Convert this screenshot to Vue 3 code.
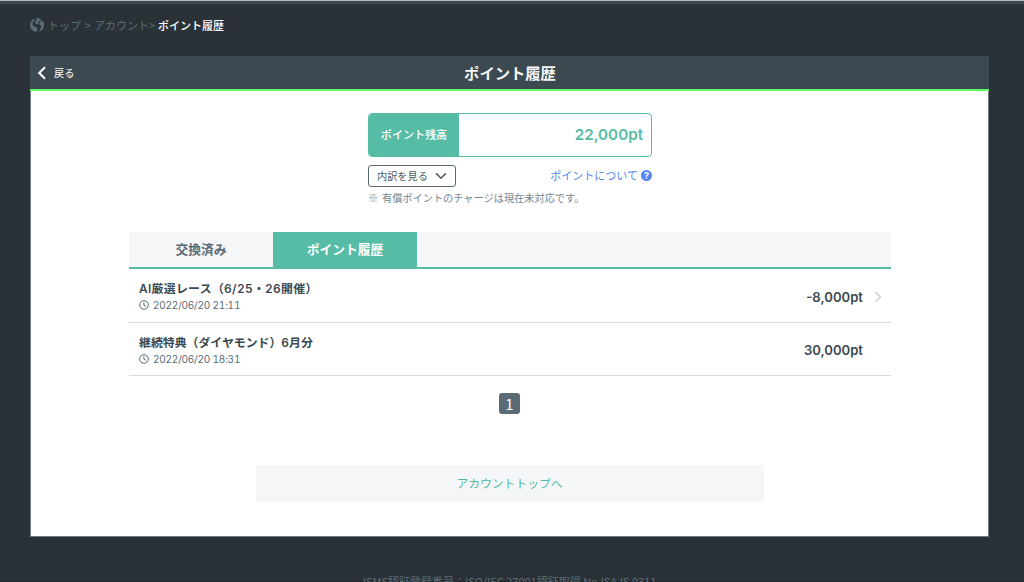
<script setup>
  import { ref } from 'vue'

  const tabs = ref(['交換済み', 'ポイント履歴'])
  const currentTab = ref(1)

  const histories = ref([
    {
      title: 'AI厳選レース（6/25・26開催）',
      date: '2022/06/20 21:11',
      point: '-8,000pt',
      link: true
    },
    {
      title: '継続特典（ダイヤモンド）6月分',
      date: '2022/06/20 18:31',
      point: '30,000pt',
      link: false
    }
  ])
</script>

<template>
  <div class="app">
    <nav class="breadcrumb">
      <svg class="logo" viewBox="0 0 14 14">
        <path d="M4.600.4C1.900 1.300 0 3.900 0 7c0 3.400 2.500 6.300 5.800 6.900 1-.6 1.700-1.500 1.600-2.700-.1-1.500-1.200-2.100-2.500-2.500C3.200 8.200 2.300 6.900 2.700 5.300c.3-1.300 1.100-2 2.300-2.400C4 2.500 3.900 1.300 4.600.4z" />
        <path d="M6.500 0c-.5.900-.3 1.700.5 2.200-1.200.4-2.100 1.300-1.900 2.500.2 1.200 1.300 1.800 2.400 1.500 1-.3 1.500-1.300 1-2.200C9.200 3.300 10.300 3 11.200 1.500A7 7 0 0 0 6.500 0z" />
        <path d="M12.300 2.600c-1 .8-2.500 1.200-2.800 2.600-.2 1.400.7 2.200 1.700 2.300-.1 2.400-.9 4.400-2.500 6.300C11.800 13 14 10.300 14 7c0-1.600-.6-3.200-1.700-4.400z" />
      </svg>
      <a class="top">トップ</a>
      <span class="gt">&gt;</span>
      <a>アカウント&gt;</a>
      <span class="here">ポイント履歴</span>
    </nav>

    <main class="panel">
      <header class="panel-head">
        <a class="back">
          <svg viewBox="0 0 10 14"><path d="M8 1.300 2.200 7 8 12.700" /></svg>
          <span>戻る</span>
        </a>
        <h1>ポイント履歴</h1>
      </header>

      <section class="balance">
        <div class="balance-box">
          <span class="label">ポイント残高</span>
          <span class="value">22,000pt</span>
        </div>
        <div class="balance-sub">
          <button>
            内訳を見る
            <svg viewBox="0 0 12 8"><path d="M1.200 1.400 6 6.200l4.800-4.800" /></svg>
          </button>
          <a class="about">
            <span>ポイントについて</span>
            <i>?</i>
          </a>
        </div>
        <p>※ 有償ポイントのチャージは現在未対応です。</p>
      </section>

      <div class="tabs">
        <a v-for="(tab, index) in tabs"
        :key="index"
        :class="{ active: currentTab == index }"
        @click="currentTab = index">{{ tab }}</a>
      </div>

      <ul class="list">
        <li v-for="(item, index) in histories" :key="index">
          <div class="info">
            <h2>{{ item.title }}</h2>
            <div class="date">
              <svg viewBox="0 0 10 10">
                <circle cx="5" cy="5" r="4.300" />
                <path d="M4.900 2.300v2.900l1.900 1.100" />
              </svg>
              <span>{{ item.date }}</span>
            </div>
          </div>
          <span class="point">{{ item.point }}</span>
          <svg v-if="item.link" class="arrow" viewBox="0 0 8 12"><path d="M1.400 1.200 6.400 6l-5 4.800" /></svg>
        </li>
      </ul>

      <div class="pager"><span>1</span></div>

      <a class="account-top">アカウントトップへ</a>
    </main>

    <footer>ISMS認証登録番号：ISO/IEC 27001認証取得 No.ISA IS 0311</footer>
  </div>
</template>

<style>
body{
  margin: 0;
  background: #2a3238;
  overflow: hidden;
}
</style>

<style scoped>
*{
  margin: 0;
  padding: 0;
  box-sizing: border-box;
}
.app{
  height: 582px;
  overflow: hidden;
  background: #2a3238;
  border-top: 1px solid #b4bec0;
  box-shadow: inset 0 3px 0 #3c4950, inset 0 -1px 0 #20272b;
  color: #3c4950;
  font-family: "Noto Sans CJK JP", sans-serif;
}
svg{
  flex: none;
  fill: none;
  stroke: currentColor;
}
.breadcrumb{
  display: flex;
  align-items: center;
  height: 55px;
  padding: 0 0 8px 30px;
  font-size: 11px;
  color: #5b6c76;
  white-space: nowrap;
}
.logo{
  width: 14px;
  height: 14px;
  fill: currentColor;
  stroke: none;
  margin-right: 4px;
}
.gt{
  width: 13px;
  text-align: center;
}
.here{
  margin-left: 3px;
  color: #fff;
  font-weight: 500;
}
.panel{
  width: 959px;
  height: 481px;
  margin-left: 30px;
  background: #fff;
  border: 1px solid #737b80;
  border-width: 0 1px 1px;
}
.panel-head{
  display: grid;
  grid-template-columns: 100px 1fr 100px;
  align-items: center;
  height: 35px;
  margin: 0 -1px;
  background: #3c4950;
  border-bottom: 2px solid #5cfc62;
}
.back{
  display: flex;
  align-items: center;
  padding-left: 7px;
  color: #fff;
  font-size: 10.200px;
}
.back svg{
  width: 10px;
  height: 14px;
  stroke-width: 2;
  margin-right: 7px;
}
h1{
  padding: 0 0 1px 1px;
  color: #f4f6f8;
  font-size: 15.300px;
  font-weight: 700;
  line-height: 20px;
  text-align: center;
}
.balance{
  width: 284px;
  margin: 22px 0 0 337px;
}
.balance-box{
  display: flex;
  height: 44px;
  border: 1px solid #56bca6;
  border-radius: 4px;
  overflow: hidden;
}
.label{
  width: 90px;
  background: #56bca6;
  color: #fff;
  font-size: 11.050px;
  font-weight: 500;
  line-height: 40px;
  text-align: center;
}
.value{
  flex: 1;
  padding-right: 8px;
  color: #56bca6;
  font-family: Inter, sans-serif;
  font-size: 15.200px;
  font-weight: 600;
  line-height: 42px;
  text-align: right;
}
.balance-sub{
  display: flex;
  justify-content: space-between;
  margin-top: 8px;
}
button{
  display: flex;
  align-items: center;
  width: 88px;
  height: 22px;
  padding: 0 7px 2px 8px;
  background: #fff;
  border: 1px solid #5a6b75;
  border-radius: 3px;
  color: #4d5e68;
  font-family: inherit;
  font-size: 10.200px;
  white-space: nowrap;
}
button svg{
  width: 12px;
  height: 8px;
  margin: 2px 0 0 7px;
  stroke-width: 1.600;
}
.about{
  display: flex;
  align-items: center;
  height: 20px;
  color: #5586f5;
  font-size: 11px;
}
.about i{
  width: 11px;
  height: 11px;
  margin: 1px 0 0 3px;
  border-radius: 50%;
  background: #5586f5;
  color: #fff;
  font: 700 9px/11px Inter, sans-serif;
  text-align: center;
}
.balance p{
  margin-top: 3px;
  color: #748690;
  font-size: 10.200px;
  line-height: 16px;
  word-spacing: 1.500px;
  white-space: nowrap;
}
.tabs{
  display: flex;
  width: 762px;
  height: 37px;
  margin: 26px 0 0 98px;
  background: #f5f6f8;
  border-bottom: 2px solid #56bca6;
}
.tabs a{
  width: 144px;
  color: #5a6b75;
  font-size: 12.750px;
  font-weight: 700;
  line-height: 34px;
  text-align: center;
}
.tabs a.active{
  background: #56bca6;
  color: #fff;
}
.list{
  width: 762px;
  margin-left: 98px;
  list-style: none;
}
.list li{
  display: flex;
  align-items: center;
  height: 53.500px;
  padding: 3px 9px 0 10px;
  border-bottom: 1px solid #d5dde0;
}
.info{
  flex: 1;
}
h2{
  font-family: Inter, "Noto Sans CJK JP", sans-serif;
  font-size: 11.900px;
  font-weight: 600;
  font-variant-numeric: tabular-nums;
  line-height: 17px;
}
.list li:first-child h2{
  letter-spacing: 0.300px;
}
.date{
  display: flex;
  align-items: center;
  height: 16px;
  color: #5a6b75;
  font-family: Inter, sans-serif;
  font-size: 10px;
  font-variant-numeric: tabular-nums;
  letter-spacing: -0.200px;
}
.date svg{
  width: 10px;
  height: 10px;
  margin-right: 4px;
}
.point{
  margin-right: 19px;
  font-family: Inter, sans-serif;
  font-size: 13.100px;
  font-weight: 600;
}
.arrow{
  width: 8px;
  height: 12px;
  margin-left: -8px;
  color: #c6cdd0;
  stroke-width: 1.300;
}
.pager{
  display: flex;
  justify-content: center;
  margin-top: 17px;
}
.pager span{
  width: 21px;
  height: 21px;
  border-radius: 3px;
  background: #5a6b75;
  color: #fff;
  font-size: 15px;
  line-height: 21px;
  text-align: center;
}
.account-top{
  display: block;
  width: 508px;
  height: 37px;
  margin: 51px auto 0;
  background: #f5f6f8;
  color: #56bca6;
  font-size: 11.800px;
  line-height: 36px;
  text-align: center;
}
footer{
  width: 1019px;
  margin-top: 36px;
  color: #5b6c76;
  font-size: 11px;
  line-height: 16px;
  text-align: center;
  white-space: nowrap;
}
</style>
